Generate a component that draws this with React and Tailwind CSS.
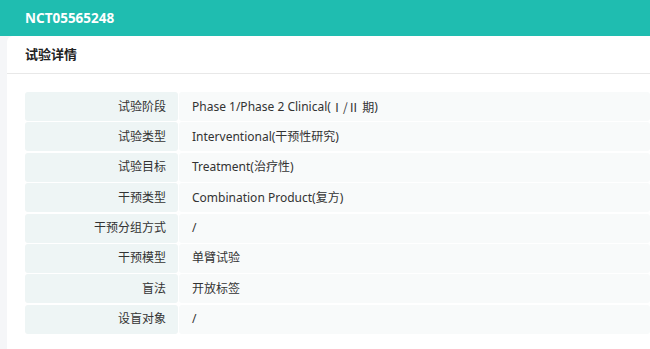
import React from "react";

const rows = [
  ["试验阶段", <>Phase 1/Phase 2 Clinical(<span style={{ fontFamily: '"Noto Sans CJK SC", sans-serif' }}> Ⅰ/Ⅱ 期</span>)</>],
  ["试验类型", "Interventional(干预性研究)"],
  ["试验目标", "Treatment(治疗性)"],
  ["干预类型", "Combination Product(复方)"],
  ["干预分组方式", "/"],
  ["干预模型", "单臂试验"],
  ["盲法", "开放标签"],
  ["设盲对象", "/"],
];

const App = () => {
  return (
    <div
      className="w-[650px] h-[349px] overflow-hidden bg-[#f5f6f8] text-[#333]"
      style={{ fontFamily: '"Noto Sans", "Noto Sans CJK SC", sans-serif' }}
    >
      <div className="h-[36px] bg-[#1fbdb0] flex items-center px-[25px]">
        <span className="text-white font-bold text-[13.5px]">NCT05565248</span>
      </div>
      <div className="ml-[7px] bg-white rounded-tl-[6px] h-[313px]">
        <div className="h-[38px] flex items-center pl-[18px] border-b border-[#e8e8e8]">
          <span className="text-[13px] font-bold text-[#222]">试验详情</span>
        </div>
        <div className="pt-[18px] pl-[18px] flex flex-col gap-[1.4px]">
          {rows.map(([label, value], i) => (
            <div key={i} className="flex h-[29px] gap-px text-[12px]">
              <div className="w-[153px] bg-[#eef5f5] rounded-[3px] flex items-center justify-end pr-[12px]">
                {label}
              </div>
              <div className="flex-1 bg-[#f8fafa] rounded-[3px] flex items-center pl-[13px]">
                {value}
              </div>
            </div>
          ))}
        </div>
      </div>
    </div>
  );
};

export default App;
